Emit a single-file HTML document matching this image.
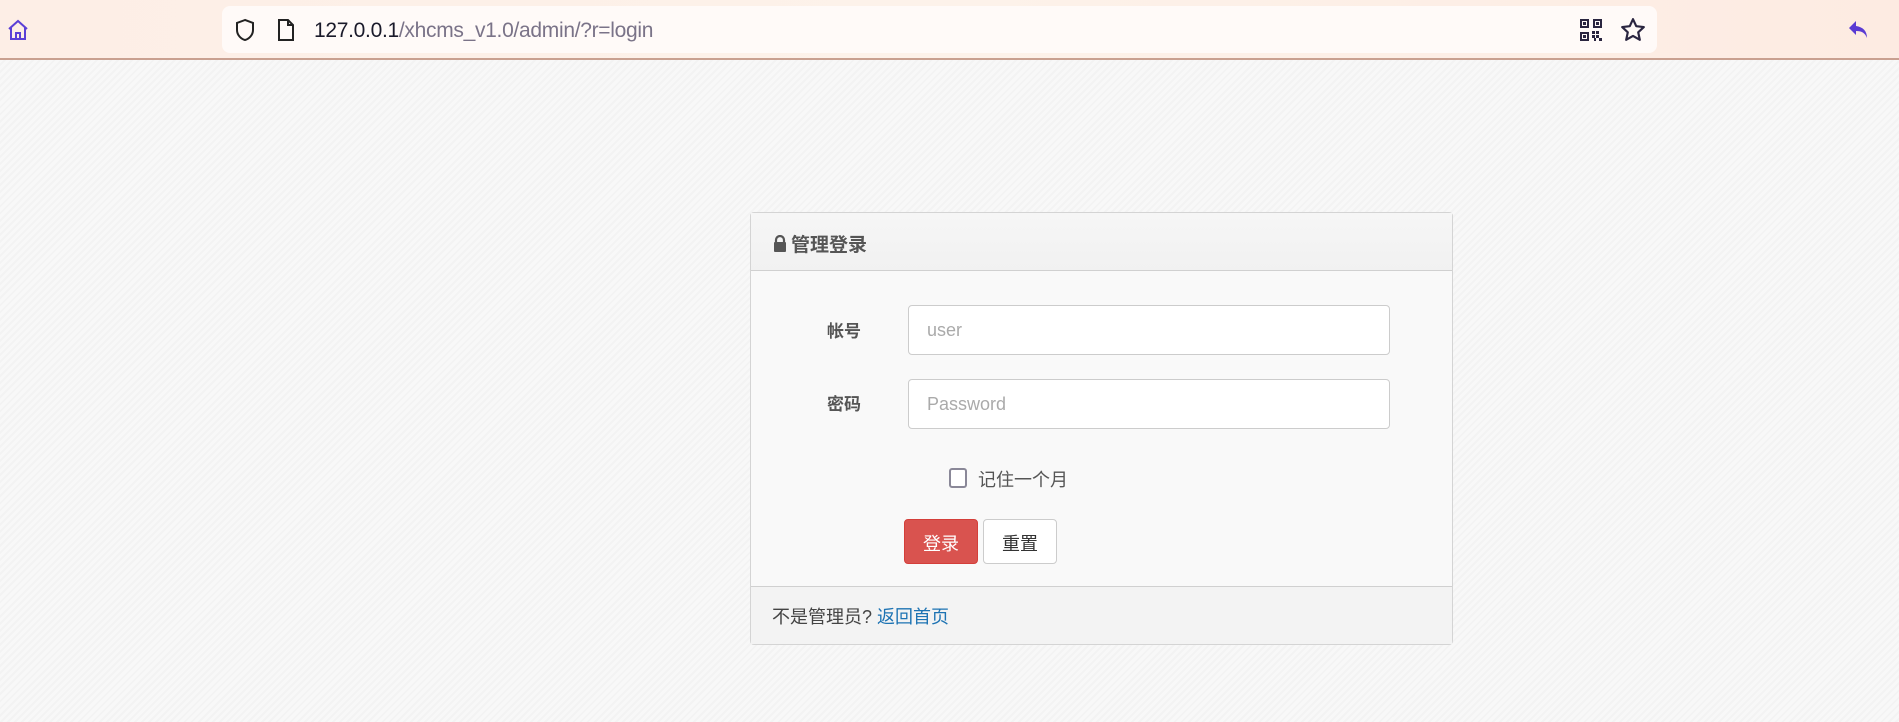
<!DOCTYPE html>
<html><head><meta charset="utf-8"><style>
*{margin:0;padding:0;box-sizing:border-box}
body{width:1899px;height:722px;overflow:hidden;font-family:"Liberation Sans","Noto Sans CJK SC",sans-serif;background:#f6f6f6;position:relative;
background-image:repeating-linear-gradient(135deg,#f3f3f3 0 2px,#f8f8f8 2px 5px);}
.top{position:absolute;left:0;top:0;width:1899px;height:60px;background:linear-gradient(90deg,#fdeee6,#fdf2ea 50%,#fdebe2);border-bottom:2px solid #c9a090}
.addr{position:absolute;left:222px;top:6px;width:1435px;height:47px;background:#fffaf8;border-radius:8px}
.url{position:absolute;left:314px;top:19px;font-size:21px;color:#7a7388;letter-spacing:-0.3px}
.url b{font-weight:normal;color:#1a1a2a}
.ab{position:absolute}
.panel{position:absolute;left:750px;top:212px;width:703px;height:433px;border:1px solid #d4d4d4;border-radius:4px;background:#f9f9f9}
.ph{height:58px;border-bottom:1px solid #d0d0d0;background:linear-gradient(#f6f6f6,#f1f1f1);padding:17px 0 0 22px;font-size:19px;font-weight:bold;color:#555}
.pf{position:absolute;left:0;right:0;bottom:0;height:58px;border-top:1px solid #d0d0d0;background:#f3f3f3;padding:16px 0 0 21px;font-size:18px;color:#444}
.pf a{color:#1d73b3;text-decoration:none}
.lbl{position:absolute;font-size:17px;font-weight:bold;color:#555}
.inp{position:absolute;left:157px;width:482px;height:50px;background:#fff;border:1px solid #ccc;border-radius:4px;padding:14px 0 0 18px;font-size:18px;color:#aaa}
.btn{position:absolute;top:306px;height:45px;border-radius:4px;font-size:18px;text-align:center;padding-top:10px}
</style></head><body>
<div class="top">
<svg class="ab" style="left:6px;top:18px" width="24" height="24" viewBox="0 0 24 24" fill="none" stroke="#5b3fd6" stroke-width="2"><path d="M3 11 12 3l9 8M5 9v12h14V9M10 21v-6h4v6"/></svg>
<div class="addr"></div>
<svg class="ab" style="left:234px;top:18px" width="22" height="24" viewBox="0 0 22 24" fill="none" stroke="#222" stroke-width="2"><path d="M11 2 3 5v7c0 5 4 9 8 10 4-1 8-5 8-10V5z"/></svg>
<svg class="ab" style="left:277px;top:18px" width="18" height="24" viewBox="0 0 18 24" fill="none" stroke="#222" stroke-width="2"><path d="M2 2h9l5 5v15H2zM11 2v5h5"/></svg>
<div class="url"><b>127.0.0.1</b>/xhcms_v1.0/admin/?r=login</div>
<svg class="ab" style="left:1580px;top:19px" width="22" height="22" viewBox="0 0 22 22" fill="#2a2540"><path d="M0 0h9v9H0zM2 2v5h5V2zM13 0h9v9h-9zm2 2v5h5V2zM0 13h9v9H0zm2 2v5h5v-5zM3 3h3v3H3zM16 3h3v3h-3zM3 16h3v3H3zM12 12h3v3h-3zM16 12h3v3h-3zM12 16h3v3h-3zM16 16h3v3h-3zM19 19h3v3h-3zM14 19h2v3h-2z"/></svg>
<svg class="ab" style="left:1620px;top:17px" width="26" height="26" viewBox="0 0 24 24" fill="none" stroke="#2a2540" stroke-width="2" stroke-linejoin="round"><path d="M12 2l3 6.5 7 .8-5.2 4.8 1.5 7L12 17.5 5.7 21.1l1.5-7L2 9.3l7-.8z"/></svg>
<svg class="ab" style="left:1848px;top:19px" width="22" height="22" viewBox="0 0 22 22" fill="#5a3bd3"><path d="M8 2 1 9l7 7v-4c6 0 9 2 11 7 0-7-4-11-11-12z"/></svg>
</div>
<div class="panel">
<div class="ph"><svg width="14" height="17" viewBox="0 0 14 17" style="vertical-align:-1px;margin-right:4px"><path d="M3 8V5a4 4 0 0 1 8 0v3" fill="none" stroke="#555" stroke-width="2.2"/><rect x="1" y="7" width="12" height="10" rx="1" fill="#555"/></svg>管理登录</div>
<div class="lbl" style="left:76px;top:104px">帐号</div>
<div class="inp" style="top:92px">user</div>
<div class="lbl" style="left:76px;top:177px">密码</div>
<div class="inp" style="top:166px">Password</div>
<div style="position:absolute;left:198px;top:255px;width:18px;height:20px;border:2.5px solid #8a8898;border-radius:3px;background:#fff"></div>
<div style="position:absolute;left:227px;top:253px;font-size:18px;color:#555">记住一个月</div>
<div class="btn" style="left:153px;width:74px;background:#d9534f;border:1px solid #d43f3a;color:#fff">登录</div>
<div class="btn" style="left:232px;width:74px;background:#fff;border:1px solid #ccc;color:#333">重置</div>
<div class="pf">不是管理员? <a>返回首页</a></div>
</div>
</body></html>
